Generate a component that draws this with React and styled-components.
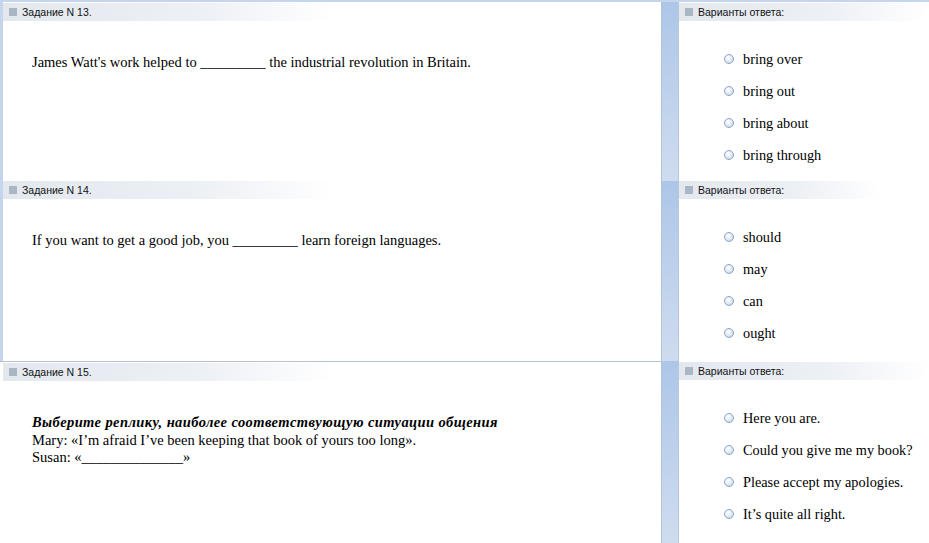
import React from "react";
import styled, { createGlobalStyle } from "styled-components";

const Global = createGlobalStyle`
  html, body {
    margin: 0;
    padding: 0;
    background: #c4d5ec;
    overflow: hidden;
  }
`;

const Page = styled.div`
  display: grid;
  grid-template-columns: 658px 18px 1fr;
  grid-template-rows: 179px 180px 182px;
  padding: 2px 0 0 3px;
  width: 929px;
  height: 543px;
  box-sizing: border-box;
  background: #c4d5ec;
`;

const QuestionCell = styled.div`
  background: #fff;
  border-top: ${(p) => (p.$divided ? "1px solid #b9c1cc" : "none")};
  margin-left: ${(p) => (p.$divided ? "-3px" : "0")};
  padding-left: ${(p) => (p.$divided ? "3px" : "0")};
  display: flex;
  flex-direction: column;
`;

const Gutter = styled.div`
  background: linear-gradient(#adc6e8, #cfdcef);
  border-left: 1px solid #b3c3d6;
  border-right: 1px solid #b8c7d9;
`;

const AnswerCell = styled.div`
  background: #fff;
  display: flex;
  flex-direction: column;
`;

const Header = styled.div`
  display: flex;
  align-items: center;
  gap: 5px;
  height: 18px;
  margin-top: ${(p) => p.$offset}px;
  width: ${(p) => p.$width};
  padding-left: 6px;
  box-sizing: border-box;
  background: linear-gradient(to right, #e3e8ef 0%, #edf0f5 60%, #ffffff 100%);
  font-family: "Liberation Sans", Arial, sans-serif;
  font-size: 10.5px;
  color: #111;
`;

const Marker = styled.span`
  width: 8px;
  height: 8px;
  background: #aab6c3;
  flex: none;
`;

const Question = styled.div`
  padding: 33px 0 0 29px;
  font-family: "Liberation Serif", "Times New Roman", serif;
  font-size: 14.5px;
  line-height: 17.5px;
  color: #000;
`;

const Lead = styled.div`
  font-weight: bold;
  font-style: italic;
  letter-spacing: 0.4px;
`;

const Options = styled.div`
  display: flex;
  flex-direction: column;
  gap: 14px;
  padding: 29px 0 0 45px;
`;

const Option = styled.label`
  display: flex;
  align-items: center;
  gap: 9px;
  height: 18px;
  font-family: "Liberation Serif", "Times New Roman", serif;
  font-size: 14.3px;
  color: #000;
`;

const Radio = styled.span`
  width: 10px;
  height: 10px;
  border-radius: 50%;
  box-sizing: border-box;
  border: 1px solid #8ea6c4;
  background: radial-gradient(circle at 40% 35%, #ffffff 0%, #e4ecf6 45%, #b9cbe2 100%);
  flex: none;
`;

const tasks = [
  {
    n: 13,
    text: ["James Watt's work helped to _________ the industrial revolution in Britain."],
    options: ["bring over", "bring out", "bring about", "bring through"],
    answerWidth: "100%",
    offset: 1,
  },
  {
    n: 14,
    text: ["If you want to get a good job, you _________ learn foreign languages."],
    options: ["should", "may", "can", "ought"],
    answerWidth: "201px",
    offset: 0,
  },
  {
    n: 15,
    lead: "Выберите реплику, наиболее соответствующую ситуации общения",
    text: [
      "Mary: «I’m afraid I’ve been keeping that book of yours too long».",
      "Susan: «______________»",
    ],
    options: [
      "Here you are.",
      "Could you give me my book?",
      "Please accept my apologies.",
      "It’s quite all right.",
    ],
    answerWidth: "100%",
    offset: 1,
    divided: true,
  },
];

export default function App() {
  return (
    <>
      <Global />
      <Page>
        {tasks.map((t) => (
          <React.Fragment key={t.n}>
            <QuestionCell $divided={t.divided}>
              <Header $width="330px" $offset={t.offset}>
                <Marker />
                Задание N {t.n}.
              </Header>
              <Question>
                {t.lead && <Lead>{t.lead}</Lead>}
                {t.text.map((line, i) => (
                  <div key={i}>{line}</div>
                ))}
              </Question>
            </QuestionCell>
            <Gutter />
            <AnswerCell>
              <Header $width={t.answerWidth} $offset={t.offset}>
                <Marker />
                Варианты ответа:
              </Header>
              <Options>
                {t.options.map((o) => (
                  <Option key={o}>
                    <Radio />
                    {o}
                  </Option>
                ))}
              </Options>
            </AnswerCell>
          </React.Fragment>
        ))}
      </Page>
    </>
  );
}
